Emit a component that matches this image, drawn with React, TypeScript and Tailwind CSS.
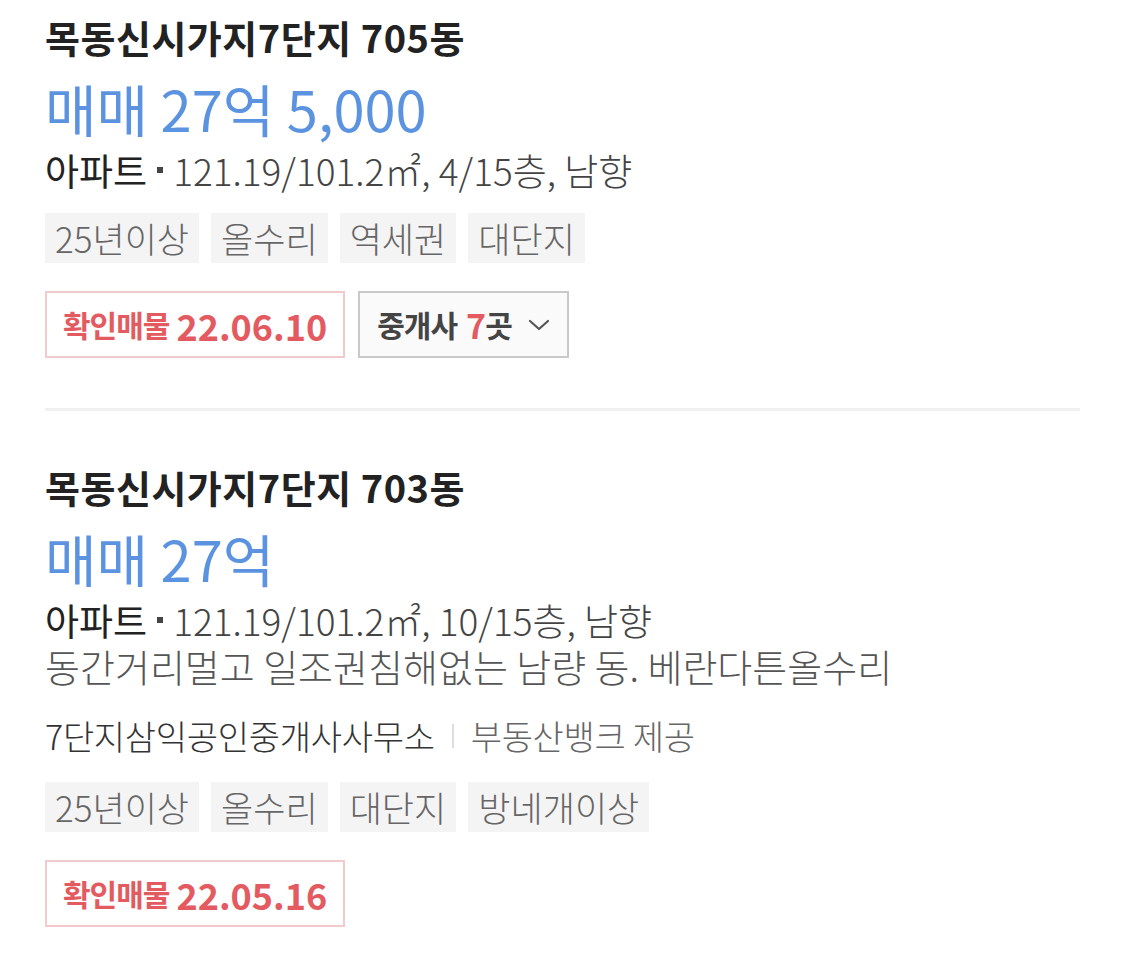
const font = { fontFamily: '"Noto Sans CJK KR", "Noto Sans", sans-serif' }

type Listing = {
  title: string
  price: string
  spec: string
  desc?: string
  agent?: string
  source?: string
  tags: string[]
  confirmed: string
  agents?: number
}

const listings: Listing[] = [
  {
    title: '목동신시가지7단지 705동',
    price: '매매 27억 5,000',
    spec: '121.19/101.2㎡, 4/15층, 남향',
    tags: ['25년이상', '올수리', '역세권', '대단지'],
    confirmed: '22.06.10',
    agents: 7,
  },
  {
    title: '목동신시가지7단지 703동',
    price: '매매 27억',
    spec: '121.19/101.2㎡, 10/15층, 남향',
    desc: '동간거리멀고 일조권침해없는 남량 동. 베란다튼올수리',
    agent: '7단지삼익공인중개사사무소',
    source: '부동산뱅크 제공',
    tags: ['25년이상', '올수리', '대단지', '방네개이상'],
    confirmed: '22.05.16',
  },
]

function Chevron() {
  return (
    <svg width="22" height="14" viewBox="0 0 22 14" fill="none" className="ml-[16px]">
      <path d="M2 3l9 8 9-8" stroke="#555" strokeWidth="2.2" strokeLinecap="round" strokeLinejoin="round" />
    </svg>
  )
}

function Item({ l }: { l: Listing }) {
  return (
    <div>
      <h2 className="text-[38px] leading-[44px] font-bold text-[#222] tracking-[0.5px]">{l.title}</h2>
      <p className="mt-[19px] text-[56px] leading-[60px] text-[#5b93e0]">{l.price}</p>
      <div className="mt-[9px] h-[46px] flex items-center text-[37px] leading-[46px] whitespace-nowrap">
        <span className="text-[#222]">아파트</span>
        <span className="w-[6px] h-[6px] bg-[#444] mx-[10px]" />
        <span className="text-[#444] font-light">{l.spec}</span>
      </div>
      {l.desc && (
        <div className="h-[46px] flex items-center text-[38px] leading-[46px] text-[#555] font-light whitespace-nowrap">
          {l.desc}
        </div>
      )}
      {l.agent && (
        <div className="mt-[24px] h-[46px] flex items-center text-[34px] leading-[46px]">
          <span className="text-[#333] font-light tracking-[-0.3px]">{l.agent}</span>
          <span className="w-[2px] h-[24px] bg-[#ddd] mx-[17px]" />
          <span className="text-[#666] font-light tracking-[-0.3px]">{l.source}</span>
        </div>
      )}
      <div className={`${l.agent ? 'mt-[23px]' : 'mt-[20px]'} flex gap-3`}>
        {l.tags.map((t) => (
          <span key={t} className="h-[50px] px-[10px] flex items-center bg-[#f4f4f4] text-[#666] text-[35px] font-light">
            {t}
          </span>
        ))}
      </div>
      <div className="mt-[28px] flex gap-[13px]">
        <div className="h-[67px] px-[16px] flex items-center border-2 border-[#f2cacb] text-[#e35b61] font-bold">
          <span className="text-[30px] tracking-[-1px]">확인매물</span>
          <span className="ml-[7px] text-[36px]">{l.confirmed}</span>
        </div>
        {l.agents !== undefined && (
          <div className="h-[67px] px-[17px] flex items-center border-2 border-[#c9c9c9] bg-[#fafafa] text-[#444] font-bold text-[30px] tracking-[-1px]">
            중개사
            <span className="ml-[9px] text-[#e35b61] text-[34px]">{l.agents}</span>곳
            <Chevron />
          </div>
        )}
      </div>
    </div>
  )
}

export default function App() {
  return (
    <main className="w-[1125px] min-h-[961px] bg-white px-[45px] pt-[15px]" style={font}>
      <Item l={listings[0]} />
      <div className="mt-[50px] mb-[54px] h-[3px] bg-[#f0f0f0]" />
      <Item l={listings[1]} />
    </main>
  )
}
